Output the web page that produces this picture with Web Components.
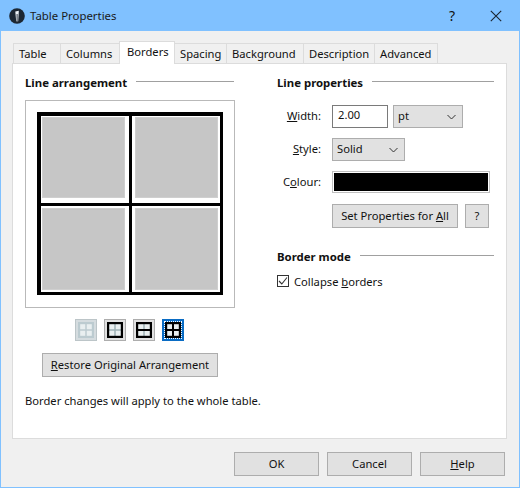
<!DOCTYPE html>
<html>
<head>
<meta charset="utf-8">
<title>Table Properties</title>
<style>
  html, body { margin: 0; padding: 0; }
  body { font: 11.2px "Noto Sans", sans-serif; color: #111; background: #f0f0f0; }
  u { text-decoration: underline; text-underline-offset: 1px; }
</style>
</head>
<body>

<prop-dialog>
  <tab-bar slot="tabs">
    <tab-item style="--w:47px">Table</tab-item>
    <tab-item style="--w:59px">Columns</tab-item>
    <tab-item style="--w:55px" active>Borders</tab-item>
    <tab-item style="--w:52px">Spacing</tab-item>
    <tab-item style="--w:77px">Background</tab-item>
    <tab-item style="--w:71px">Description</tab-item>
    <tab-item style="--w:63px">Advanced</tab-item>
  </tab-bar>

  <div slot="left">
    <group-title>Line arrangement</group-title>
    <border-preview></border-preview>
    <border-presets></border-presets>
    <dlg-button style="--w:176px;--mx:17px;margin-top:12px"><u>R</u>estore Original Arrangement</dlg-button>
    <p style="margin:15px 0 0;line-height:18px;white-space:nowrap">Border changes will apply to the whole table.</p>
  </div>

  <div slot="right">
    <group-title>Line properties</group-title>
    <line-form></line-form>
    <group-title style="margin-top:19px">Border mode</group-title>
    <check-box style="margin-top:8px" checked>Collapse <u>b</u>orders</check-box>
  </div>

  <dlg-button slot="footer" style="--w:85px">OK</dlg-button>
  <dlg-button slot="footer" style="--w:85px">Cancel</dlg-button>
  <dlg-button slot="footer" style="--w:85px"><u>H</u>elp</dlg-button>
</prop-dialog>

<script>
// small helper, every element is the same shadow + template thing
function shadow(el, html) {
  el.attachShadow({ mode: 'open' });
  el.shadowRoot.innerHTML = html;
}

class PropDialog extends HTMLElement {
  constructor() {
    super();
    shadow(this, `
      <style>
        :host { display: flex; flex-direction: column; width: 520px; height: 488px; box-sizing: border-box;
                background: #f0f0f0; border: solid #80c1ff; border-width: 0 1px 1px 1px; }
        #title { height: 31px; flex: none; background: #80c1ff; display: flex; align-items: center; margin: 0 -1px; }
        #logo { margin: 0 5px 0 9px; flex: none; }
        #name { flex: 1; color: #1a1a1a; font-size: 11.4px; }
        #help { width: 46px; text-align: center; font-size: 14px; margin-right: 5px; }
        #close { width: 32px; margin-right: 8px; display: flex; justify-content: center; }
        #tabs { height: 32px; flex: none; box-sizing: border-box; padding: 10px 0 0 12px; display: flex; }
        #pane { margin: 0 12px 0 11px; height: 376px; flex: none; box-sizing: border-box; background: #fff;
                border: 1px solid #dcdcdc; padding: 9px 12px 0 12px;
                display: grid; grid-template-columns: 209px 217px; column-gap: 43px; }
        #footer { display: flex; justify-content: flex-end; gap: 8px; padding: 13px 14px 0 0; }
      </style>
      <div id="title">
        <svg id="logo" width="16" height="16" viewBox="0 0 16 16">
          <circle cx="8" cy="8" r="7.8" fill="#1c2733"/>
          <path d="M6.300 3.400 9.800 2.800 9.200 13.200 7.200 13.200Z" fill="#eef3f8"/>
          <path d="M8.100 6v7" stroke="#1c2733" stroke-width=".9"/>
        </svg>
        <span id="name">Table Properties</span>
        <span id="help">?</span>
        <span id="close">
          <svg width="12" height="12" viewBox="0 0 12 12"><path d="M.8.8l10.4 10.4M11.2.8.8 11.2" stroke="#1a2530" stroke-width="1.1" fill="none"/></svg>
        </span>
      </div>
      <div id="tabs"><slot name="tabs"></slot></div>
      <div id="pane">
        <div><slot name="left"></slot></div>
        <div><slot name="right"></slot></div>
      </div>
      <div id="footer"><slot name="footer"></slot></div>
    `);
  }
}

class TabBar extends HTMLElement {
  constructor() {
    super();
    shadow(this, `<style>:host { display: flex; height: 22px; align-items: flex-end; }</style><slot></slot>`);
  }
}

class TabItem extends HTMLElement {
  constructor() {
    super();
    shadow(this, `
      <style>
        :host { display: block; box-sizing: border-box; width: calc(var(--w) + 1px); height: 20px; line-height: 19px; padding-left: 5px;
                background: #f0f0f0; border: 1px solid #dcdcdc; border-bottom: 0; margin-right: -1px; white-space: nowrap; }
        :host([active]) { height: 23px; line-height: 19px; padding-left: 7px; background: #fff; position: relative; z-index: 1; margin-bottom: -1px; }
      </style>
      <slot></slot>`);
  }
}

class GroupTitle extends HTMLElement {
  constructor() {
    super();
    shadow(this, `
      <style>
        :host { display: flex; align-items: center; gap: 9px; font-weight: 700; font-size: 11.400px; height: 18px; white-space: nowrap; }
        i { flex: 1; height: 1px; background: #a0a0a0; margin-bottom: 2px; }
      </style>
      <slot></slot><i></i>`);
  }
}

class BorderPreview extends HTMLElement {
  constructor() {
    super();
    shadow(this, `
      <style>
        :host { display: block; box-sizing: border-box; width: 210px; height: 208px; margin-top: 9px;
                border: 1px solid #b9b9b9; padding: 11px 11px 0; background: #fff; }
        #grid { width: 186px; height: 183px; box-sizing: border-box; background: #000; border: solid #000; border-width: 4px 3px 3px 4px;
                display: grid; grid-template-columns: 88px 88px; grid-template-rows: 87px 86px; gap: 3px; }
        /* the white inset is not even on all sides, same as the original preview */
        #grid div { background: #c6c6c6; border: solid #fff; box-shadow: inset 0 0 0 1px #cfcfcf; }
        #grid div:nth-child(1) { border-width: 1px 4px 5px 1px; }
        #grid div:nth-child(2) { border-width: 1px 2px 5px 3px; }
        #grid div:nth-child(3) { border-width: 2px 4px 2px 1px; }
        #grid div:nth-child(4) { border-width: 2px 2px 2px 3px; }
      </style>
      <div id="grid"><div></div><div></div><div></div><div></div></div>`);
  }
}

class BorderPresets extends HTMLElement {
  constructor() {
    super();
    // the four little toggle icons: none, box, box + h, all
    const icon = (outer, cross, h, cls) => `
      <span class="b ${cls}">
        <svg width="16" height="16" viewBox="0 0 16 16">
          <rect x="1" y="1" width="14" height="14" fill="#e9eff0"/>
          <path d="M8 1v14" stroke="${cross}" stroke-width="${cross === '#000' ? 2 : 1.5}"/>
          <path d="M1 8h14" stroke="${h}" stroke-width="${h === '#000' ? 2 : 1.5}"/>
          <rect x="1" y="1" width="14" height="14" fill="none" stroke="${outer}" stroke-width="2.4"/>
        </svg>
      </span>`;
    shadow(this, `
      <style>
        :host { display: flex; gap: 7px; width: 210px; margin-top: 11px; box-sizing: border-box; padding-left: 50px; }
        .b { width: 22px; height: 22px; box-sizing: border-box; border: 1px solid #adadad; background: #e1e1e1;
             display: flex; align-items: center; justify-content: center; }
        .off { background: #d5dcdf; border-color: #bcc5c8; }
        .sel { background: #0a6cc4; border: 2px solid #0a6cc4; outline: 1px dotted #fff; outline-offset: -3px; }
      </style>
      ${icon('#bccbd0', '#bccbd0', '#bccbd0', 'off')}
      ${icon('#000', '#9db0b5', '#9db0b5', '')}
      ${icon('#000', '#9db0b5', '#000', '')}
      ${icon('#000', '#000', '#000', 'sel')}
    `);
  }
}

class LineForm extends HTMLElement {
  constructor() {
    super();
    shadow(this, `
      <style>
        :host { display: grid; grid-template-columns: 44px 1fr; column-gap: 11px; align-items: center; margin-top: 14px; }
        label { text-align: right; padding-bottom: 2px; }
        u { text-underline-offset: 1px; }
        .row { display: flex; gap: 5px; align-items: center; }
        #input { box-sizing: border-box; width: 56px; height: 23px; line-height: 17px; border: 1px solid #7a7a7a; padding: 0 5px; background: #fff; }
        #swatch { box-sizing: border-box; width: 158px; height: 22px; background: #000; border: 1px solid #c0c0c0; outline: 1px solid #fff; outline-offset: -2px; margin-top: 10px; }
        #btns { grid-column: 2; display: flex; gap: 7px; margin-top: 11px; }
        .top { margin-top: 10px; }
      </style>
      <label><u>W</u>idth:</label>
      <div class="row"><span id="input">2.00</span><drop-down style="--w:70px">pt</drop-down></div>
      <label class="top"><u>S</u>tyle:</label>
      <div class="row top"><drop-down style="--w:73px">Solid</drop-down></div>
      <label class="top">C<u>o</u>lour:</label>
      <div id="swatch"></div>
      <div id="btns">
        <dlg-button style="--w:126px">Set Properties for <u>A</u>ll</dlg-button>
        <dlg-button style="--w:24px">?</dlg-button>
      </div>
    `);
  }
}

class DropDown extends HTMLElement {
  constructor() {
    super();
    shadow(this, `
      <style>
        :host { display: flex; align-items: center; justify-content: space-between; box-sizing: border-box; width: var(--w); height: 23px;
                background: #e1e1e1; border: 1px solid #adadad; padding: 0 6px 0 4px; }
        span { padding-bottom: 2px; }
      </style>
      <span><slot></slot></span>
      <svg width="9" height="6" viewBox="0 0 9 6"><path d="M.5 1 4.500 5 8.500 1" fill="none" stroke="#333" stroke-width="1"/></svg>`);
  }
}

class DlgButton extends HTMLElement {
  constructor() {
    super();
    shadow(this, `
      <style>
        :host { display: flex; align-items: center; justify-content: center; box-sizing: border-box; width: var(--w); height: 24px;
                margin-left: var(--mx, 0); background: #e1e1e1; border: 1px solid #adadad; white-space: nowrap; padding-bottom: 2px; }
      </style>
      <span><slot></slot></span>`);
  }
}

class CheckBox extends HTMLElement {
  constructor() {
    super();
    shadow(this, `
      <style>
        :host { display: flex; align-items: center; gap: 5px; height: 16px; }
        #box { width: 12px; height: 12px; box-sizing: border-box; border: 1px solid #333; background: #fff; display: flex; }
      </style>
      <span id="box"><svg width="10" height="10" viewBox="0 0 10 10"><path d="M1 5 3.800 8 9 1.500" fill="none" stroke="#333" stroke-width="1.100"/></svg></span>
      <span><slot></slot></span>`);
  }
}

customElements.define('prop-dialog', PropDialog);
customElements.define('tab-bar', TabBar);
customElements.define('tab-item', TabItem);
customElements.define('group-title', GroupTitle);
customElements.define('border-preview', BorderPreview);
customElements.define('border-presets', BorderPresets);
customElements.define('line-form', LineForm);
customElements.define('drop-down', DropDown);
customElements.define('dlg-button', DlgButton);
customElements.define('check-box', CheckBox);
</script>
</body>
</html>
